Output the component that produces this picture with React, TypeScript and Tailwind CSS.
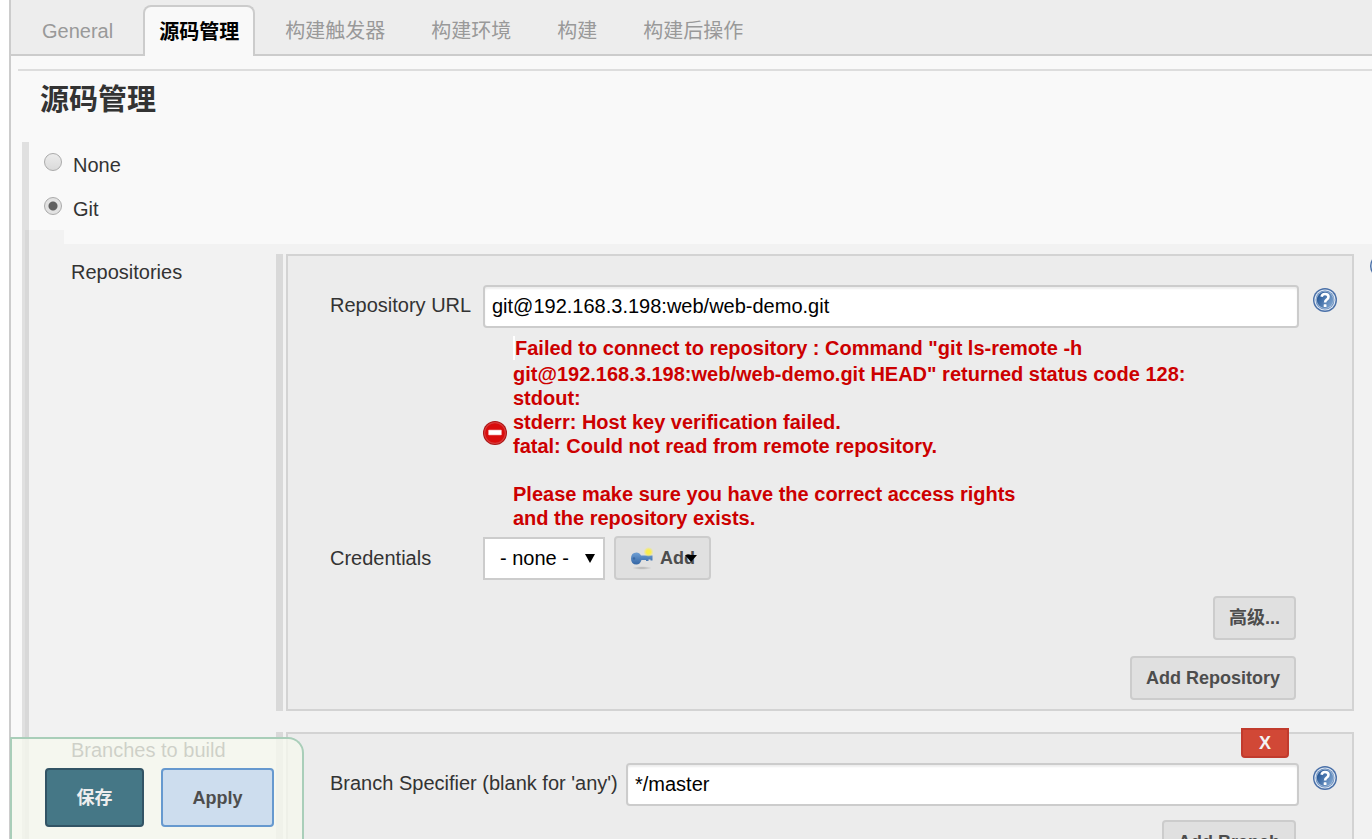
import React from 'react';
import clsx from 'clsx';

const tabs = ['General', '源码管理', '构建触发器', '构建环境', '构建', '构建后操作'];

const HelpIcon: React.FC = () => (
  <svg viewBox="0 0 24 24" className="h-6 w-6 shrink-0">
    <defs>
      <linearGradient id="help" x1="0" y1="0" x2="1" y2="0.6">
        <stop offset="0" stopColor="#174a8c" />
        <stop offset="1" stopColor="#7aa0cc" />
      </linearGradient>
    </defs>
    <circle cx="12" cy="12" r="12" fill="#4a70a8" />
    <circle cx="12" cy="12" r="10.6" fill="#dce6f2" />
    <circle cx="12" cy="12" r="9.4" fill="#5f84b8" />
    <circle cx="12" cy="12" r="8.8" fill="#b4c8e0" />
    <circle cx="12" cy="12" r="8.2" fill="url(#help)" />
    <path d="M8.6 8.8Q9 6 12 6Q15.5 6 15.5 8.8Q15.5 10.6 13.7 11.6Q12.1 12.5 12.1 14.6" fill="none" stroke="#fff" strokeWidth="2.6" />
    <rect x="10.7" y="16.2" width="2.8" height="2.8" rx="0.6" fill="#fff" />
  </svg>
);

const ErrorIcon: React.FC = () => (
  <svg viewBox="0 0 24 24" className="h-6 w-6 shrink-0">
    <circle cx="12" cy="12" r="12" fill="#a91414" />
    <circle cx="12" cy="12" r="11" fill="#d83a3a" />
    <circle cx="12" cy="12" r="9.8" fill="#d90c0c" />
    <rect x="5.5" y="9" width="13" height="5" rx="0.6" fill="#fff" stroke="#f3a0a0" strokeWidth="0.6" />
  </svg>
);

const KeyIcon: React.FC = () => (
  <svg viewBox="0 0 24 24" className="h-6 w-6 shrink-0">
    <defs>
      <radialGradient id="spark">
        <stop offset="0.4" stopColor="#fbee4c" />
        <stop offset="1" stopColor="#fbee4c" stopOpacity="0" />
      </radialGradient>
      <linearGradient id="key" x1="0" y1="0" x2="0" y2="1">
        <stop offset="0" stopColor="#6f9fd4" />
        <stop offset="1" stopColor="#3466a5" />
      </linearGradient>
      <radialGradient id="shadow">
        <stop offset="0.3" stopColor="#bdbdbd" />
        <stop offset="1" stopColor="#e0e0e0" />
      </radialGradient>
    </defs>
    <ellipse cx="12" cy="22" rx="10" ry="1.8" fill="url(#shadow)" />
    <path d="M1 12.5Q1 6.5 6.5 6.5Q9.5 6.5 11 9.5H22.5V14.5H20.5V13.5H18.5V15H16V14H11.5Q10 18.5 6.5 18.5Q1 18.5 1 12.5Z" fill="url(#key)" />
    <circle cx="4" cy="12.5" r="1.2" fill="#3a69a3" />
    <circle cx="18.5" cy="6" r="5" fill="url(#spark)" />
  </svg>
);

const Arrow: React.FC<{ className: string }> = ({ className }) => (
  <svg viewBox="0 0 10 9" preserveAspectRatio="none" className={clsx('pointer-events-none absolute', className)}>
    <path d="M0 0H10L5 9Z" fill="#000" />
  </svg>
);

const Button: React.FC<{ children: React.ReactNode }> = ({ children }) => (
  <button className="relative flex h-11 items-center rounded border-2 border-[#ccc] bg-[#e0e0e0] px-[14px] text-lg font-bold text-[#4d4d4d]">
    {children}
  </button>
);

const Radio: React.FC<{ label: string; checked?: boolean }> = ({ label, checked }) => (
  <label className="flex h-11 items-center gap-[11px]">
    <input
      type="radio"
      name="scm"
      defaultChecked={checked}
      className="mb-1 h-[18px] w-[18px] appearance-none rounded-full border border-[#aaa] bg-linear-to-b from-[#ececec] to-[#dadada] checked:bg-[radial-gradient(circle,#606060_4px,#e2e2e2_5px)]"
    />
    <span className="pt-[2px]">{label}</span>
  </label>
);

const Panel: React.FC<{ children: React.ReactNode; className?: string }> = ({ children, className }) => (
  <div className="flex min-w-0 flex-1 border-l-[7px] border-[#d9d9d9] pl-[3px]">
    <div className={clsx('min-w-0 flex-1 border-2 border-[#d3d3d3] bg-[#ececec] pl-[42px]', className)}>{children}</div>
  </div>
);

const inputClass =
  'h-[43px] min-w-0 flex-1 rounded border-2 border-[#ccc] bg-white px-[7px] text-black shadow-[inset_0_2px_2px_#eee]';

export default function App() {
  return (
    <div className="h-screen overflow-hidden bg-white pl-[9px] font-['Liberation_Sans','Noto_Sans_CJK_SC',sans-serif] text-[20px] leading-6 text-[#333]">
      <main className="min-h-screen border-l-2 border-[#ccc] bg-[#f9f9f9]">
        <nav className="flex h-14 items-end gap-[14px] border-b-2 border-[#ccc] bg-[#ededed] pl-[15px] text-[#999]">
          {tabs.map((tab, i) => (
            <button
              key={tab}
              className={clsx(
                'shrink-0 rounded-t-lg border-2 border-b-0 px-[14px]',
                i === 1 ? '-mb-[2px] h-[51px] border-[#ccc] bg-[#f9f9f9] font-bold text-black' : 'h-[49px] border-transparent'
              )}
            >
              {tab}
            </button>
          ))}
        </nav>

        <div className="ml-[7px] mt-[13px] border-t-2 border-[#ddd] pl-[22px] pt-[13px]">
          <h1 className="text-[29px] font-bold leading-8">源码管理</h1>
        </div>

        <div className="ml-[11px] mt-[26px] border-l-[7px] border-[#e0e0e0]">
          <div className="pl-[15px]">
            <Radio label="None" />
            <Radio label="Git" checked />
          </div>

          <div className="-ml-1 border-l-4 border-[#d8d8d8]">
            <div className="h-[14px] w-[35px] bg-[#f2f2f2]" />
            <div className="bg-[#f2f2f2] pt-[10px]">
              <section className="flex">
                <h2 className="w-[247px] shrink-0 pl-[42px] pt-[6px]">Repositories</h2>
                <Panel className="pb-[9px] pt-[29px]">
                  <div className="flex pr-[15px]">
                    <label htmlFor="url" className="w-[153px] shrink-0 pt-2">Repository URL</label>
                    <input id="url" defaultValue="git@192.168.3.198:web/web-demo.git" className={inputClass} />
                    <div className="ml-[14px] mt-[3px]"><HelpIcon /></div>
                  </div>
                  <div className="ml-[153px] mt-2 flex items-center gap-[6px] font-bold text-[#c00]">
                    <ErrorIcon />
                    <div>
                      <p className="mb-[2px] border-l-2 border-white">Failed to connect to repository : Command "git ls-remote -h</p>
                      <p>git@192.168.3.198:web/web-demo.git HEAD" returned status code 128:</p>
                      <p>stdout:</p>
                      <p>stderr: Host key verification failed.</p>
                      <p>fatal: Could not read from remote repository.</p>
                      <p className="mt-6">Please make sure you have the correct access rights</p>
                      <p>and the repository exists.</p>
                    </div>
                  </div>
                  <div className="mt-[6px] flex items-center">
                    <label htmlFor="credentials" className="w-[153px]">Credentials</label>
                    <div className="relative mr-[9px]">
                      <select id="credentials" className="h-[43px] w-[122px] appearance-none border-2 border-[#ccc] bg-white pl-[15px] text-black">
                        <option>- none -</option>
                      </select>
                      <Arrow className="right-[10px] top-[17px] h-[9px] w-[10px]" />
                    </div>
                    <Button>
                      <KeyIcon />
                      <span className="ml-[6px]">Add</span>
                      <Arrow className="right-3 top-[17px] h-[7px] w-3" />
                    </Button>
                  </div>
                  <div className="mt-4 flex flex-col items-end gap-4 pr-14">
                    <Button>高级...</Button>
                    <Button>Add Repository</Button>
                  </div>
                </Panel>
                <div className="ml-4 w-[2px] shrink-0 overflow-hidden"><HelpIcon /></div>
              </section>

              <section className="mt-[21px] flex">
                <h2 className="w-[247px] shrink-0 pl-[42px] pt-[6px]">Branches to build</h2>
                <Panel className="relative pb-[9px] pt-[29px]">
                  <button className="absolute -top-[6px] right-[63px] h-[30px] w-12 rounded-b border-2 border-[#c13b2d] bg-[#d14836] text-lg font-bold leading-6 text-[#f4f4f4]">
                    X
                  </button>
                  <div className="flex pr-[15px]">
                    <label htmlFor="branch" className="w-[296px] shrink-0 pt-2">Branch Specifier (blank for 'any')</label>
                    <input id="branch" defaultValue="*/master" className={inputClass} />
                    <div className="ml-[14px] mt-[3px]"><HelpIcon /></div>
                  </div>
                  <div className="mt-[14px] flex justify-end pr-14">
                    <Button>Add Branch</Button>
                  </div>
                </Panel>
                <div className="w-[18px] shrink-0" />
              </section>
            </div>
          </div>
        </div>
      </main>

      <footer className="fixed bottom-0 left-[10px] flex gap-[17px] rounded-tr-2xl border-2 border-b-0 border-[#a9ceb9] bg-[#f5f8ee]/80 px-[28px] pb-3 pl-[33px] pt-[29px] text-lg font-bold">
        <button className="h-[59px] w-[99px] rounded border-2 border-[#325465] bg-[#457786] text-[#eee]">保存</button>
        <button className="h-[59px] w-[113px] rounded border-2 border-[#6699cf] bg-[#cdddee] text-[#4d4d4d]">Apply</button>
      </footer>
    </div>
  );
}
